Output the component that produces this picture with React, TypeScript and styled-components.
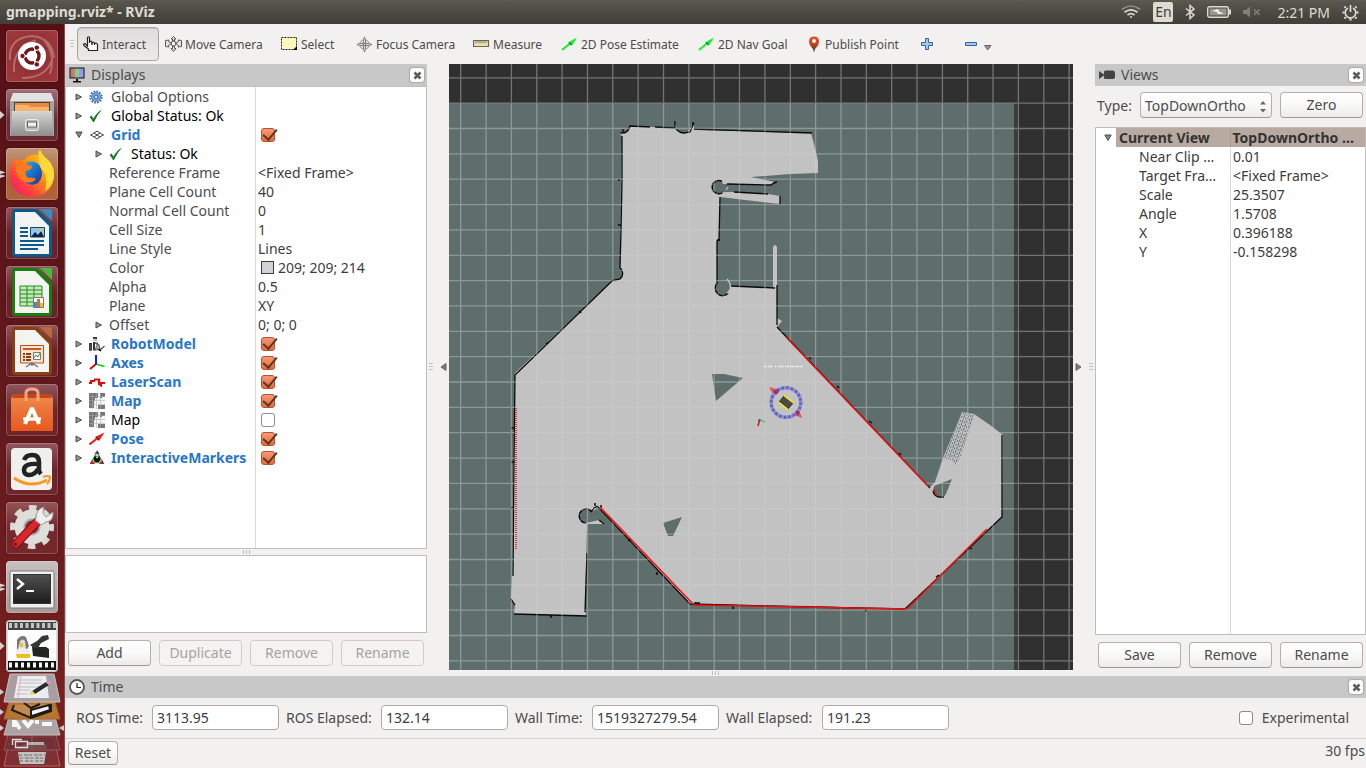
import React from "react";
import styled, { createGlobalStyle, css } from "styled-components";

const GlobalStyle = createGlobalStyle`
  * { box-sizing: border-box; }
  body { margin: 0; background: #f2f1ef; }
  body, button, input, select { font-family: "Noto Sans", "Open Sans", sans-serif; font-size: 14px; color: #4c4c4c; }
`;

/* ---------- frame ---------- */

const Desktop = styled.div`
  display: flex;
  flex-direction: column;
  height: 100vh;
  min-height: 640px;
  overflow: hidden;
`;

const MenuBar = styled.header`
  flex: none;
  display: flex;
  align-items: center;
  justify-content: space-between;
  height: 24px;
  padding: 0 7px 0 6px;
  background: linear-gradient(#5f5c4f, #57554b 10%, #3f3e39);
  color: #dfdbd2;
`;

const WindowTitle = styled.h1`
  margin: 0;
  font-size: 14px;
  line-height: 24px;
  font-weight: 700;
`;

const Indicators = styled.div`
  display: flex;
  align-items: center;
  gap: 12px;
  svg { display: block; }
`;

const LanguageBadge = styled.span`
  width: 20px;
  height: 20px;
  border-radius: 2px;
  background: #dfdbd2;
  color: #3f3e39;
  font-size: 14px;
  line-height: 20px;
  text-align: center;
`;

const Clock = styled.time`
  font-size: 14px;
  padding-left: 4px;
`;

const Body = styled.div`
  flex: 1;
  min-height: 0;
  display: flex;
`;

const Launcher = styled.nav`
  flex: none;
  display: flex;
  flex-direction: column;
  align-items: center;
  gap: 7px;
  width: 65px;
  padding: 6px 1px 0 0;
  overflow: hidden;
  background: linear-gradient(#561015, #641a1d 55%, #7c2121);
  border-right: 1px solid #8c4a47;
`;

const TileRow = styled.div`
  flex: none;
  display: flex;
  align-items: center;
  width: 64px;
  height: 52px;
`;

const Pips = styled.span`
  width: 6px;
  height: 12px;
  svg { display: block; }
`;

const Tile = styled.button<{ $bg: string }>`
  width: 52px;
  height: 52px;
  padding: 0;
  border: 0;
  border-radius: 4px;
  background: ${(p) => p.$bg};
  box-shadow: inset 0 0 0 1px rgba(255, 255, 255, 0.2), 0 0 2px rgba(0, 0, 0, 0.4);
  svg { display: block; }
`;

const FoldedStack = styled.svg`
  flex: none;
  display: block;
  margin-top: -6px;
`;

const Rviz = styled.main`
  flex: 1;
  min-width: 0;
  display: flex;
  flex-direction: column;
  background: #f2f1ef;
`;

/* ---------- toolbar ---------- */

const Toolbar = styled.div`
  flex: none;
  display: flex;
  align-items: center;
  height: 40px;
  padding-left: 5px;
`;

const Grip = styled.span`
  width: 7px;
  height: 8px;
  background: repeating-linear-gradient(#c9c7c4 0 1px, transparent 1px 3px);
  background-size: 4px 8px;
  background-repeat: no-repeat;
`;

const ToolButton = styled.button<{ $width: number; $active?: boolean }>`
  display: flex;
  align-items: center;
  gap: 3px;
  width: ${(p) => p.$width}px;
  height: 34px;
  padding: 0 0 0 5px;
  border: 1px solid transparent;
  border-radius: 4px;
  background: none;
  font-size: 12px;
  white-space: nowrap;
  svg { flex: none; display: block; }
  ${(p) =>
    p.$active &&
    css`
      border-color: #a9a5a0;
      background: linear-gradient(#dfdedc, #ebeae8);
      box-shadow: inset 0 1px 1px rgba(0, 0, 0, 0.12);
    `}
`;

/* ---------- docks ---------- */

const Workspace = styled.div`
  flex: 1;
  min-height: 0;
  display: flex;
`;

const Dock = styled.section<{ $width: number }>`
  flex: none;
  display: flex;
  flex-direction: column;
  width: ${(p) => p.$width}px;
`;

const DockTitle = styled.div`
  flex: none;
  display: flex;
  align-items: center;
  height: 22px;
  padding: 0 3px 0 4px;
  background: #c8c8c8;
  svg { display: block; }
`;

const DockName = styled.h2`
  flex: 1;
  margin: 0 0 0 6px;
  font-size: 14px;
  line-height: 22px;
  font-weight: 400;
`;

const CloseButton = styled.button`
  display: grid;
  place-items: center;
  width: 14px;
  height: 14px;
  padding: 0;
  border: 0;
  border-radius: 3px;
  background: #fdfdfd;
  box-shadow: 0 0 1px 1px rgba(120, 116, 110, 0.35);
`;

const TreeFrame = styled.div<{ $split: number }>`
  flex: 1;
  min-height: 0;
  overflow: hidden;
  border: 1px solid #c1beb9;
  background: linear-gradient(#dcdbda, #dcdbda) ${(p) => p.$split}px 0 / 1px 100% no-repeat #fff;
`;

const Tree = styled.table`
  width: 100%;
  border-collapse: collapse;
  table-layout: fixed;
  font-size: 14px;
  line-height: 19px;
`;

const NameCol = styled.col<{ $width: number }>`
  width: ${(p) => p.$width}px;
`;

const NameCell = styled.th<{ $indent: number; $tone?: string }>`
  height: 19px;
  padding: 0 0 0 ${(p) => p.$indent}px;
  text-align: left;
  font-weight: ${(p) => (p.$tone === "link" ? 700 : 400)};
  color: ${(p) => (p.$tone === "link" ? "#2a76c6" : p.$tone === "black" ? "#000" : "#4c4c4c")};
`;

const NameLine = styled.span`
  display: flex;
  align-items: center;
  height: 19px;
  white-space: nowrap;
`;

const Arrow = styled.span`
  flex: none;
  width: 14px;
  svg { display: block; }
`;

const RowIcon = styled.span`
  flex: none;
  width: 22px;
  svg { display: block; }
`;

const ValueCell = styled.td`
  height: 19px;
  padding: 0 0 0 3px;
  color: #3c3c3c;
  white-space: nowrap;
`;

const ValueLine = styled.span`
  display: flex;
  align-items: center;
  height: 19px;
  padding-left: 3px;
  gap: 4px;
`;

const Swatch = styled.span`
  width: 13px;
  height: 13px;
  border: 1px solid #3c3c3c;
  background: #d1d1d6;
`;

const CheckBox = styled.input`
  appearance: none;
  position: relative;
  width: 14px;
  height: 14px;
  margin: 0;
  border: 1px solid #8f8b86;
  border-radius: 3px;
  background: #fff;
  &:checked {
    border-color: #b4552f;
    background: linear-gradient(#f29a76, #e9693c);
  }
  &:checked::after {
    content: "";
    position: absolute;
    left: 4px;
    top: -3px;
    width: 6px;
    height: 12px;
    border: solid #5e3422;
    border-width: 0 2px 2px 0;
    transform: rotate(40deg);
  }
`;

const SelectedName = styled.th`
  height: 19px;
  padding: 0;
  text-align: left;
  color: #333;
  background: linear-gradient(#b8aaa1, #b8aaa1) 20px 0 no-repeat;
`;

const ToggleName = styled.span`
  display: grid;
  grid-template-columns: 15px 1fr;
  padding-left: 8px;
  align-items: center;
  white-space: nowrap;
`;

const SelectedValue = styled.td`
  height: 19px;
  padding: 0 0 0 2px;
  font-weight: 700;
  color: #333;
  background: #b8aaa1;
  border-left: 1px solid #a89b93;
  white-space: nowrap;
`;

const PropName = styled.th`
  height: 19px;
  padding: 0 0 0 43px;
  text-align: left;
  font-weight: 400;
  color: #3c3c3c;
  white-space: nowrap;
`;

const HHandle = styled.div`
  flex: none;
  display: flex;
  align-items: center;
  justify-content: center;
  height: 6px;
  &::after {
    content: "";
    width: 7px;
    height: 4px;
    background: repeating-linear-gradient(90deg, #c0bebb 0 1px, transparent 1px 3px);
  }
`;

const VHandle = styled.div`
  flex: none;
  display: flex;
  align-items: center;
  justify-content: center;
  gap: 7px;
  width: 22px;
  svg { display: block; }
`;

const HelpBox = styled.div`
  flex: none;
  height: 78px;
  border: 1px solid #c1beb9;
  background: #fff;
`;

const ButtonRow = styled.div<{ $below: number }>`
  flex: none;
  display: grid;
  grid-template-columns: repeat(auto-fit, 83px);
  gap: 8px;
  padding: 7px 0 ${(p) => p.$below}px 3px;
`;

const PushButton = styled.button`
  height: 26px;
  padding: 0 5px;
  border: 1px solid #b3afaa;
  border-bottom-color: #9c9893;
  border-radius: 4px;
  background: linear-gradient(#fff, #f9f9f8 50%, #ecebea);
  font-size: 14px;
  line-height: 22px;
  &:disabled {
    border-color: #cfccc8;
    background: #f4f3f2;
    color: #a5a3a1;
  }
`;

const TypeRow = styled.div`
  flex: none;
  display: grid;
  grid-template-columns: 35px 132px 83px;
  column-gap: 8px;
  align-items: center;
  padding: 6px 0 9px 2px;
  label { white-space: nowrap; }
`;

const SelectWrap = styled.div`
  position: relative;
  display: flex;
  svg { position: absolute; right: 5px; top: 8px; pointer-events: none; }
`;

const TypeSelect = styled.select`
  appearance: none;
  width: 100%;
  height: 26px;
  padding: 0 4px;
  border: 1px solid #b3afaa;
  border-bottom-color: #9c9893;
  border-radius: 4px;
  background: linear-gradient(#fff, #f9f9f8 50%, #ecebea);
`;

const Viewport = styled.svg`
  flex: 1;
  min-width: 0;
  min-height: 0;
  display: block;
  background: #303030;
`;

/* ---------- time panel ---------- */

const TimeRow = styled.div`
  flex: none;
  display: flex;
  align-items: center;
  height: 41px;
  padding: 0 17px 1px 11px;
  border-bottom: 1px solid #d6d4d1;
`;

const TimeField = styled.div<{ $label: number }>`
  display: grid;
  grid-template-columns: ${(p) => p.$label}px 127px;
  align-items: center;
  margin-right: 7px;
  white-space: nowrap;
`;

const TimeInput = styled.input`
  width: 100%;
  height: 25px;
  padding: 0 4px;
  border: 1px solid #aeaaa5;
  border-radius: 4px;
  background: #fff;
  color: #3c3c3c;
`;

const Experimental = styled.label`
  display: flex;
  align-items: center;
  gap: 9px;
  margin-left: auto;
`;

const StatusRow = styled.footer`
  flex: none;
  display: flex;
  align-items: flex-start;
  justify-content: space-between;
  height: 29px;
  padding: 2px 1px 0 3px;
`;

const ResetButton = styled(PushButton)`
  width: 50px;
  height: 24px;
  padding: 0;
  line-height: 20px;
`;

/* ---------- small icons ---------- */

const RightArrow = () => (
  <svg width="8" height="8" viewBox="0 0 8 8"><path d="M1 1L6.500 4L1 7Z" fill="#999" stroke="#4c4c4c" strokeWidth="1" /></svg>
);
const DownArrow = () => (
  <svg width="8" height="8" viewBox="0 0 8 8"><path d="M.8 1H7.200L4 6.500Z" fill="#888" stroke="#4c4c4c" strokeWidth="1" /></svg>
);
const CheckMark = () => (
  <svg width="14" height="14" viewBox="0 0 14 14"><path d="M.5 8L2.500 6.500L4.500 9.500Q8 3 13 .5Q8 6 5 13H4Q2.500 10 .5 8Z" fill="#1c7a22" /></svg>
);
const Gear = () => (
  <svg width="14" height="14" viewBox="0 0 14 14">
    <circle cx="7" cy="7" r="5.600" fill="none" stroke="#3f6fb5" strokeWidth="2" strokeDasharray="1.800 1.100" />
    <circle cx="7" cy="7" r="4.300" fill="#8fb0de" stroke="#4a78ba" />
    <circle cx="7" cy="7" r="2.200" fill="#6f97d2" stroke="#3f6fb5" />
    <circle cx="7" cy="7" r=".9" fill="#fff" />
  </svg>
);
const GridIcon = () => (
  <svg width="16" height="12" viewBox="0 0 16 12" fill="none" stroke="#444" strokeWidth="1">
    <path d="M2 6L8 2L14 6L8 10ZM5 4L11 8M11 4L5 8" />
    <path d="M8 2V3M2 6H1M14 6H15" />
  </svg>
);
const RobotIcon = () => (
  <svg width="16" height="16" viewBox="0 0 16 16">
    <path d="M4 1H8V3H4Z" fill="#33415e" /><path d="M4.500 3.500H8V5H4.500Z" fill="#aaa" />
    <path d="M0 7H3V14.500H2V11L1 14.500H0ZM4 6H6V10L7 14.500H4Z" fill="#333" />
    <path d="M1.500 8V15M6 7L9 7.500M8 7V14.500M9.500 8L11 14L15.500 10" stroke="#555" strokeWidth="1.300" fill="none" />
    <path d="M9 13L12 15" stroke="#000" strokeWidth="1.500" />
  </svg>
);
const AxesIcon = () => (
  <svg width="16" height="16" viewBox="0 0 16 16" fill="none" strokeWidth="1.800">
    <path d="M7 9L1 14" stroke="#e00000" /><path d="M7 9L15.500 11.500" stroke="#00d820" /><path d="M7 9.500V0" stroke="#0000e8" />
  </svg>
);
const LaserIcon = () => (
  <svg width="16" height="10" viewBox="0 0 16 10" fill="none" stroke="#f00000" strokeWidth="2">
    <path d="M0 6H2V4H5L6 2.500H10V7L12 8.500V6H16" />
  </svg>
);
const MapIcon = () => (
  <svg width="16" height="16" viewBox="0 0 16 16">
    <path d="M0 0H16V16H0Z" fill="#f4f4f4" />
    <path d="M0 0H9V5H6V8H5V15H0ZM11 0H16V4H13V5H11ZM9 12H16V16H9Z" fill="#777" />
    <path d="M0 3.500H16M0 7.500H16M0 11.500H16M3.500 0V16M7.500 0V16M11.500 0V16" stroke="#aaa" strokeWidth=".5" />
  </svg>
);
const PoseIcon = () => (
  <svg width="16" height="14" viewBox="0 0 16 14">
    <path d="M.5 12.500L8 6.500" stroke="#f02010" strokeWidth="2" /><path d="M6 5L15.500 .5L10 9Z" fill="#f02010" /><path d="M7 5L10 8" stroke="#8a1a10" strokeWidth="1.200" />
  </svg>
);
const MarkersIcon = () => (
  <svg width="16" height="16" viewBox="0 0 16 16">
    <path d="M8 2L2.500 12.500H13.500Z" fill="none" stroke="#30c040" strokeWidth="1.500" />
    <path d="M8 .5L10.500 4H5.500ZM1 14L3 9.500L6 14ZM15 14L13 9.500L10 14Z" fill="#e02020" />
    <path d="M8 .5L10.500 4H8ZM12.500 14H15L13.500 11ZM1 14H3L2 12Z" fill="#2030e0" />
    <circle cx="8" cy="9" r="3.300" fill="#111" /><path d="M6.500 6.500H10L8 8.500Z" fill="#fff" />
  </svg>
);
const Cross = () => (
  <svg width="9" height="9" viewBox="0 0 9 9"><path d="M1.500 1.500L7.500 7.500M7.500 1.500L1.500 7.500" stroke="#5c5c5c" strokeWidth="2.600" /></svg>
);

/* ---------- toolbar icons ---------- */

const HandIcon = () => (
  <svg width="16" height="16" viewBox="0 0 16 16">
    <path d="M4.500 10V1.500Q5.500 0 6.500 1.500V7V5.500Q8 4.500 9 6V7Q10.500 5.500 11.500 7V7.500Q13.500 6.500 14.500 8.500V14.500H5.500V13L1 9.500Q0 7.500 2 7.500Z" fill="#fff" stroke="#222" strokeWidth="1.200" />
    <path d="M9 6.500V9M11.500 7.500V9M5.500 14.500H15" stroke="#222" strokeWidth="1.200" />
  </svg>
);
const MoveIcon = () => (
  <svg width="17" height="16" viewBox="0 0 17 16" fill="#e4e4e4" stroke="#555" strokeWidth="1">
    <path d="M8.500 .5L11 3H9.500V5H7.500V3H6ZM8.500 15.500L11 12.500H9.500V10.500H7.500V12.500H6ZM.5 4.500L4 4L3.500 5.500L6.500 7.500L3.500 9.500L4 11L.5 10.500ZM16.500 4.500L13 4L13.500 5.500L10.500 7.500L13.500 9.500L13 11L16.500 10.500Z" />
    <circle cx="8.500" cy="7.500" r="2.500" fill="none" />
  </svg>
);
const SelectIcon = () => (
  <svg width="17" height="14" viewBox="0 0 17 14">
    <path d="M.5 .5H15.500V12.500H.5Z" fill="#fbf7bd" stroke="#222" strokeDasharray="2 1" /><path d="M16 9V13H12Z" fill="#000" />
  </svg>
);
const FocusIcon = () => (
  <svg width="17" height="17" viewBox="0 0 18 18" fill="#e4e4e4" stroke="#777" strokeWidth="1">
    <circle cx="9" cy="9" r="5" fill="none" /><circle cx="9" cy="9" r="2.500" fill="none" />
    <path d="M9 1L10 4V8H8V4ZM9 17L10 14V10H8V14ZM1 9L4 8H8V10H4ZM17 9L14 8H10V10H14Z" />
  </svg>
);
const RulerIcon = () => (
  <svg width="17" height="8" viewBox="0 0 17 8">
    <path d="M.5 .5H15.500V6.500H.5Z" fill="#eee2a4" stroke="#666" strokeWidth="1.200" /><path d="M3 1V3.500M5 1V3M7 1V3.500M9 1V3M11 1V3.500M13 1V3" stroke="#666" strokeWidth=".8" />
  </svg>
);
const GreenArrow = () => (
  <svg width="17" height="14" viewBox="0 0 17 14">
    <path d="M1 13L9 6.500" stroke="#0df02c" strokeWidth="1.800" /><path d="M7 5.500L16 .5L11 8.500Z" fill="#0df02c" /><path d="M8 5.500L10.500 8" stroke="#14801e" strokeWidth="1.200" />
  </svg>
);
const PinIcon = () => (
  <svg width="15" height="17" viewBox="0 0 15 17">
    <defs><linearGradient id="pin" x2="0" y2="1"><stop stopColor="#ec5130" /><stop offset=".5" stopColor="#c04428" /><stop offset="1" stopColor="#3a2a10" /></linearGradient></defs>
    <path d="M7 .5Q12 .5 12 5.500Q12 9 8 13L7 16.500L6 13Q2 9 2 5.500Q2 .5 7 .5Z" fill="url(#pin)" /><circle cx="7" cy="5" r="1.900" fill="#fff" />
  </svg>
);
const PlusIcon = () => (
  <svg width="12" height="12" viewBox="0 0 12 12"><path d="M4.500 .5H7.500V4.500H11.500V7.500H7.500V11.500H4.500V7.500H.5V4.500H4.500Z" fill="#a9c4ea" stroke="#3465a4" /></svg>
);
const MinusIcon = () => (
  <svg width="27" height="14" viewBox="0 0 27 14"><path d="M.5 5.500H11.500V8.500H.5Z" fill="#a9c4ea" stroke="#3465a4" /><path d="M19.500 8.500H26L22.700 13Z" fill="#999" stroke="#666" /></svg>
);

/* ---------- launcher drawings ---------- */

const UbuntuLogo = () => (
  <svg width="52" height="52" viewBox="0 0 52 52">
    <g fill="none" stroke="#fff" strokeOpacity=".28" strokeWidth="2">
      <path d="M4 30Q2 8 26 6Q46 8 48 28M8 42Q6 18 30 10M44 44Q50 24 38 10M16 48Q40 48 46 30" />
    </g>
    <circle cx="26" cy="26" r="14" fill="#fff" />
    <circle cx="26" cy="26" r="7" fill="none" stroke="#73171c" strokeWidth="3.400" />
    <path d="M26 26L13 26M26 26L33 14M26 26L33 38" stroke="#fff" strokeWidth="2" />
    <circle cx="26" cy="26" r="5" fill="#fff" />
    <g fill="#73171c" stroke="#fff" strokeWidth="1"><circle cx="16.500" cy="26" r="2.700" /><circle cx="30.800" cy="17.600" r="2.700" /><circle cx="30.800" cy="34.400" r="2.700" /></g>
  </svg>
);
const FilesIcon = () => (
  <svg width="52" height="52" viewBox="0 0 52 52">
    <defs><linearGradient id="cab" x2="0" y2="1"><stop stopColor="#d6d6d4" /><stop offset="1" stopColor="#8d8d8b" /></linearGradient></defs>
    <path d="M7 4H45L48 12V47H4V12Z" fill="#e2e2e0" /><path d="M4 12H48V47H4Z" fill="#a4a4a2" />
    <path d="M8 13H44V22H8Z" fill="#4b413b" /><path d="M9 14H43V22H9Z" fill="#e88a3d" /><path d="M9 16H22L24 18H43V22H9Z" fill="#f6b36e" />
    <path d="M6 22H46L47 47H5Z" fill="url(#cab)" /><rect x="19.500" y="30.500" width="13" height="11" rx="2" fill="#bbb" stroke="#ececec" /><rect x="21.500" y="33" width="9" height="5" fill="#eee" stroke="#666" />
  </svg>
);
const FirefoxIcon = () => (
  <svg width="52" height="52" viewBox="0 0 52 52">
    <defs>
      <linearGradient id="ff" x1="1" x2="0" y2="1"><stop stopColor="#ffe226" /><stop offset=".4" stopColor="#ff980e" /><stop offset=".75" stopColor="#ff3647" /><stop offset="1" stopColor="#e3157a" /></linearGradient>
      <linearGradient id="fx" x2="1" y2="1"><stop stopColor="#1db4f4" /><stop offset="1" stopColor="#1b2f9c" /></linearGradient>
    </defs>
    <path d="M4 22Q5 14 10 10L11 14Q14 11 18 12Q24 5 32 7Q31 4 34 2Q36 7 42 12Q49 19 48 29Q46 47 26 49Q5 47 4 28Z" fill="url(#ff)" />
    <path d="M20 15Q28 11 34 18Q39 28 32 35Q25 39 19 34L16 25Q20 23 21 21Z" fill="url(#fx)" />
    <path d="M10 12Q13 12 16 15Q21 15 22 17L26 18Q26 22 20 23Q18 28 23 30Q27 29 30 31Q25 37 17 33Q8 28 10 12Z" fill="#ff7a1a" />
    <path d="M34 2Q36 7 42 12Q49 19 48 29Q46 39 39 43Q42 32 38 24Q30 16 34 2Z" fill="#ffd83a" />
  </svg>
);

const DocPage = ({ edge, fold, children }: { edge: string; fold: string; children: React.ReactNode }) => (
  <svg width="52" height="52" viewBox="0 0 52 52">
    <path d="M6 5Q6 2 9 2H31L46 17V47Q46 50 43 50H9Q6 50 6 47Z" fill={edge} />
    <path d="M9 5H29L43 19V47H9Z" fill="#f3f3f2" /><path d="M34 2H46V14Z" fill={fold} />
    {children}
  </svg>
);
const WriterIcon = () => (
  <DocPage edge="#0c5a8c" fold="#3a8cc0">
    <path d="M14 21H22M14 25H22M14 29H22M14 34H38M14 38H38M14 42H32" stroke="#0c5a8c" strokeWidth="2" />
    <path d="M24.500 20.500H38.500V30H24.500Z" fill="#8fc6ea" stroke="#0c4a74" /><path d="M25 30L29 25L32 28L35 24L38 30Z" fill="#124" /><circle cx="35" cy="23" r="1.500" fill="#ffc020" />
  </DocPage>
);
const CalcIcon = () => (
  <DocPage edge="#187c10" fold="#4cb840">
    <path d="M14 20H36V40H14Z" fill="#c4eab8" stroke="#2a8a20" /><path d="M14 24H36M14 28H36M14 32H36M14 36H36M21 20V40M28 20V40" stroke="#2a8a20" />
    <path d="M27.500 31.500H37.500V41.500H27.500Z" fill="#fff" stroke="#777" /><path d="M28 36H31V41H28Z" fill="#2a9ad8" /><path d="M31 33H34V41H31Z" fill="#e06a28" /><path d="M34 37H37V41H34Z" fill="#f0c020" />
  </DocPage>
);
const ImpressIcon = () => (
  <DocPage edge="#8a3f10" fold="#b86a3c">
    <path d="M14.500 20.500H37.500V38H14.500Z" fill="#f6e0d0" stroke="#b8501c" /><path d="M17 24H35" stroke="#c85a20" strokeWidth="2" />
    <path d="M17 29H25M17 32H25M17 35H25" stroke="#8a3f10" strokeWidth="2" strokeDasharray="2 1 5" /><path d="M27.500 27.500H34.500V34.500H27.500Z" fill="#fff" stroke="#777" /><path d="M28 33L30 30L32 32L34 28" stroke="#28a028" fill="none" />
    <path d="M26 38V41M20 42L26 38L32 42" stroke="#777" strokeWidth="1.500" fill="none" />
  </DocPage>
);
const SoftwareIcon = () => (
  <svg width="52" height="52" viewBox="0 0 52 52">
    <defs><linearGradient id="bag" x2="0" y2="1"><stop stopColor="#f08a4e" /><stop offset="1" stopColor="#e8581c" /></linearGradient></defs>
    <path d="M8 10H44L47 14V47H5V14Z" fill="url(#bag)" /><path d="M8 10H44L46 14H6Z" fill="#c2481a" />
    <path d="M20 17V9Q20 5 26 5Q32 5 32 9V17" fill="none" stroke="#f6a67c" strokeWidth="3" />
    <path d="M19 40L26 24L33 40" fill="none" stroke="#fff" strokeWidth="4" strokeLinejoin="bevel" /><path d="M17 35H35" stroke="#fff" strokeWidth="3.500" />
  </svg>
);
const AmazonIcon = () => (
  <svg width="52" height="52" viewBox="0 0 52 52">
    <rect x="5" y="5" width="41" height="42" rx="4" fill="#f0f0ef" />
    <path d="M18 17Q20 12 26 12Q33 12 33 19V27Q33 29 35 31M32 21Q18 20 18 27Q18 32 23 32Q29 32 32 26" fill="none" stroke="#222" strokeWidth="4.500" />
    <path d="M8 35Q24 46 41 37" stroke="#f79a1c" strokeWidth="3" fill="none" /><path d="M37 34Q42 32 44 34Q44 38 41 41" stroke="#f79a1c" strokeWidth="2" fill="none" />
  </svg>
);
const SettingsIcon = () => (
  <svg width="52" height="52" viewBox="0 0 52 52">
    <circle cx="26" cy="25" r="18.500" fill="none" stroke="#d8d8d6" strokeWidth="7" strokeDasharray="7.300 7.230" strokeDashoffset="3.500" />
    <circle cx="26" cy="25" r="12.500" fill="none" stroke="#dededc" strokeWidth="10" /><circle cx="26" cy="25" r="7.500" fill="none" stroke="#a8a8a6" strokeWidth="2" />
    <path d="M10 42L31 20" stroke="#8c1014" strokeWidth="9" strokeLinecap="round" /><path d="M10 42L31 20" stroke="#d6282c" strokeWidth="6.500" strokeLinecap="round" />
    <path d="M30 16Q30 7 38 5L37 11L40 15L47 10Q48 19 40 20L35 23L29 18Z" fill="#eee" stroke="#999" /><circle cx="9.500" cy="42" r="1.500" fill="#5a1014" />
  </svg>
);
const TerminalIcon = () => (
  <svg width="52" height="52" viewBox="0 0 52 52">
    <defs><linearGradient id="term" x2="0" y2="1"><stop stopColor="#505050" /><stop offset="1" stopColor="#1c1c1c" /></linearGradient></defs>
    <rect x="4" y="10" width="44" height="37" rx="1" fill="#f0f0ee" stroke="#777" /><rect x="7.500" y="13.500" width="37" height="29" fill="url(#term)" stroke="#333" />
    <path d="M11 18L17 23L11 28" fill="none" stroke="#fff" strokeWidth="2.400" /><path d="M20 30H28" stroke="#fff" strokeWidth="2" />
  </svg>
);
const RecorderIcon = () => (
  <svg width="52" height="52" viewBox="0 0 52 52">
    <rect x="1" y="1" width="50" height="50" rx="3" fill="#fff" stroke="#bbb" />
    <path d="M2 2H50V10H2Z" fill="#444" /><path d="M2 41H50V50H2Z" fill="#111" />
    <path d="M3 5.500H50" stroke="#c4c4c4" strokeWidth="5" strokeDasharray="3 2.500" /><path d="M3 45H50" stroke="#f4f4f4" strokeWidth="5" strokeDasharray="3 3" />
    <path d="M11 20Q15 14 20 17L23 26L20 31H11Z" fill="#777" /><path d="M14 21Q17 18 19 21L20 29H12Z" fill="#ddd" /><path d="M9 31Q16 24 24 31V37H11Z" fill="#eee" /><path d="M10 34H24V38H11Z" fill="#e8c020" /><path d="M14 23H17V27H14Z" fill="#f0c020" />
    <path d="M26 27L40 27L43 29V38L27 36Z" fill="#222522" /><path d="M24 25L31 21L36 16L42 15L43 19L35 23L32 28L28 28Z" fill="#343834" />
  </svg>
);

const launcherItems: { name: string; bg: string; icon: React.ReactNode; pips?: number }[] = [
  { name: "Search your computer", bg: "radial-gradient(#8a2c30, #a03a3c)", icon: <UbuntuLogo /> },
  { name: "Files", bg: "linear-gradient(#a0707a, #6c2a36 60%)", icon: <FilesIcon />, pips: 1 },
  { name: "Firefox", bg: "linear-gradient(#c09878, #b0623a 60%)", icon: <FirefoxIcon />, pips: 2 },
  { name: "LibreOffice Writer", bg: "linear-gradient(#90565c, #6a2228 50%)", icon: <WriterIcon /> },
  { name: "LibreOffice Calc", bg: "linear-gradient(#90565c, #6a2228 50%)", icon: <CalcIcon /> },
  { name: "LibreOffice Impress", bg: "linear-gradient(#90565c, #6a2228 50%)", icon: <ImpressIcon /> },
  { name: "Ubuntu Software", bg: "linear-gradient(#90565c, #6e262a 50%)", icon: <SoftwareIcon /> },
  { name: "Amazon", bg: "linear-gradient(#90565c, #6e262a 50%)", icon: <AmazonIcon /> },
  { name: "System Settings", bg: "linear-gradient(#945558, #74282c 50%)", icon: <SettingsIcon /> },
  { name: "Terminal", bg: "linear-gradient(#c8c0be, #a49a98)", icon: <TerminalIcon />, pips: 2 },
  { name: "Screen recorder", bg: "#ccc", icon: <RecorderIcon />, pips: 1 },
];

const FoldedTiles = () => (
  <FoldedStack width="64" height="95" viewBox="0 0 64 95" role="img" aria-label="Folded launcher items">
    <path d="M10 64H54L60 93H4Z" fill="#7e3034" stroke="#a8686a" />
    <path d="M18 79H46L44 91H20Z" fill="#c4c2be" /><path d="M19 82H45M20 85H44M20 88H44" stroke="#8a8884" strokeWidth="1.500" strokeDasharray="3 2 4 1" /><path d="M18 73Q32 68 46 71L47 76H18Z" fill="#9c9894" />
    <path d="M8 62H56L60 77H4Z" fill="#6d3038" fillOpacity=".75" stroke="#8f5a5e" /><path d="M32 62V77" stroke="#8f5a5e" /><path d="M12.500 72V66.500H22M15.500 68.500H27.500V74.500H15.500Z" fill="none" stroke="#ddd" strokeWidth="1.400" /><path d="M28 69H44V72H28Z" fill="#b4b0ac" />
    <path d="M10 40H54L60 62H4Z" fill="#aca4a4" stroke="#c0baba" />
    <path d="M14 47V54M15 48L20 56M23 47L28 53L33 47M37 47V51M42 51H52" stroke="#f6f6f6" strokeWidth="4" fill="none" />
    <path d="M10 26H54L60 46H4Z" fill="#b8752f" stroke="#a06830" /><path d="M14 32L12 37L31 45L51 38V31" fill="#c4884c" stroke="#1c1c1c" strokeWidth="2" /><path d="M24 30L31 35L40 31" fill="none" stroke="#1c1c1c" strokeWidth="2" /><path d="M31 36V44M31 37L49 32L50 37L32 43" fill="#f4f4f4" stroke="#1c1c1c" strokeWidth="2" />
    <path d="M10 1H54L60 29H4Z" fill="#a99fa2" stroke="#c8c2c2" /><path d="M18 3H46L49 25H14Z" fill="#ecedf0" /><path d="M19 7H42M18 10H42M18 14H40M17 17H30M16 21H28" stroke="#bcbcc4" /><path d="M21 3L18 25" stroke="#e8b0b8" />
    <path d="M32 18L46 9L49 12L35 21Z" fill="#2a2a2a" /><path d="M45 9L49 7L52 9L49 12Z" fill="#d890c8" /><path d="M29 22L32 17L35 21Z" fill="#e8d060" />
    <path d="M0 16L4 19L0 22ZM0 36L4 39L0 42ZM0 52L4 55L0 58ZM64 52L59 55L64 58Z" fill="#ccc" />
  </FoldedStack>
);

/* ---------- map view ---------- */

const STEP = 25.35;
const gridPath =
  Array.from({ length: 25 }, (_, i) => `M${(460.7 + i * STEP).toFixed(1)} 64V670`).join("") +
  Array.from({ length: 24 }, (_, i) => `M449 ${(77.8 + i * STEP).toFixed(1)}H1073`).join("");

const freeSpace =
  "M630 126L675 128V122L677 130Q680 133 684 133Q689 132 691 127L694 122V130L811 133L815 148L818 161V173L790 174L751 177L775 182L771 185L727 184H718V192H734L768 194L780 196V204L720 197L719 240L717 241V288H723L731 286L773 288V247Q775 243 777 247V318L782 321L777 327L930 487L935 482L943 458L962 412L974 414L990 425L1003 435L1002 516L906 609L810 606L690 604L598 507L592 512L586 516V523L599 520L604 524H587L585 612L587 616L514 614L515 605L511 598L512 577L513 480L515 373L612 281Q622 281 623 273L620 268L621 180L622 136L619 133Q628 134 630 126Z";

const walls =
  "M620 133Q628 134 630 126L650 127M655 127L675 128V121M676 129Q680 133 684 133M684 133L690 132L694 123M694 129L812 133M622 136V180L621 230L620 268L622 270M611 281L620 279Q624 275 622 271M612 281L515 375L514 460L513 576M511 599L515 605M514 614L587 616M585 612L587 553M604 524L599 520M598 507L690 604L810 607L906 609M905 609L1002 517V435M777 327L930 488M777 325V285M731 286L775 288M717 284V241L719 240L720 197M734 192L768 194M727 184L771 185L775 182M591 512L594 508L598 506M933 491Q934 498 944 497M780 196V204";

const wallNoise =
  "M618 225H621M618 180H620M623 132V129M693 122V125M717 240H720M579 311L581 313M546 344L549 342M511 428H514M511 462H514M511 508H514M628 540H631M657 572V575M733 606V609M551 615V618M866 609V612M809 357L811 359M837 386L839 388M869 421L872 423M899 453L901 455M969 547L972 549M936 577L939 575M774 183L777 182M595 503V506M601 505V508M694 603H700";

const MapView = () => (
  <Viewport viewBox="449 64 624 606" preserveAspectRatio="xMidYMid slice" role="img" aria-label="Top-down view of the map">
    <defs>
      <pattern id="speckle" width="4" height="4" patternUnits="userSpaceOnUse" patternTransform="rotate(20)">
        <path d="M0 0H1V3H0ZM2 2H3V4H2Z" fill="#5e6e6c" />
      </pattern>
    </defs>
    <path d="M449 103.500H1014V670H449Z" fill="#5e6e6c" />
    <path d="M1014 103.500H1017V670H1014Z" fill="#3a3c3c" />
    <path d={freeSpace} fill="#c2c2c2" />
    <path d="M962 412L974 415L969 432L960 458L955 465L952 460L943 459Z" fill="url(#speckle)" />
    <path d="M712 374H724L743 378L730 389L716 401ZM663 523L682 517L673 536H668ZM934 486L952 479L946 494Q944 498 939 498Q934 497 933 491Z" fill="#5e6e6c" />
    <g fill="#5e6e6c"><circle cx="718" cy="187" r="6" /><circle cx="723" cy="288" r="7" /><circle cx="586" cy="516" r="6.500" /></g>
    <path d={walls} fill="none" stroke="#0a0a0a" strokeWidth="1.300" />
    <path d="M722 181.500A6.500 6.500 0 1 0 723 192M716.500 284A7.500 7.500 0 0 0 728 293.500M592 512A7 7 0 1 0 586 523" fill="none" stroke="#0a0a0a" strokeWidth="1.500" strokeDasharray="5 .5" />
    <path d={wallNoise} fill="none" stroke="#0a0a0a" strokeWidth="1.500" />
    <path d="M727 279Q732 284 730 290L727 293M726 190L728 187" fill="none" stroke="#c2c2c2" strokeWidth="1.300" />
    <path d={gridPath} fill="none" stroke="#d1d1d6" strokeOpacity=".42" strokeWidth="1.300" />
    <g fill="none" stroke="#f01010" strokeWidth="1.500">
      <path d="M786 337L928 486M600 507L693 604M693 605L906 609M907 609L987 529M934 489L936 495" />
      <path d="M516 408V550" strokeDasharray="1 1" />
    </g>
    <path d="M764 366.500H767M768 366.500H773M775 366.500H776M778 366.500H784M785 366.500H789M790 366.500H794M795 366.500H803" stroke="#f4f4f4" strokeWidth="1.500" strokeDasharray="1.500 .7 2 1" />
    <path d="M769 387L777 389L773 394ZM802 418L794 415L799 410Z" fill="#e05858" />
    <circle cx="786" cy="402.500" r="14.800" fill="none" stroke="#8c8cd6" strokeWidth="3.400" />
    <circle cx="786" cy="402.500" r="14.800" fill="none" stroke="#6060b4" strokeWidth="3" strokeDasharray="2 2.650" />
    <path d="M773 391L777 389L779 392L776 395ZM795 412L798 410L800 413L797 416Z" fill="#a03070" />
    <path d="M784 396L793 403L788 409L779 402Z" fill="#4a4a46" /><path d="M779 402L784 396M788 409L793 403" stroke="#2e2e2c" /><path d="M784 395.500L793.500 403M778.500 402L788 409.500" stroke="#f4f000" strokeWidth="1.400" />
    <path d="M759.500 420L758 426" stroke="#e01010" strokeWidth="1.600" /><path d="M759 420L765 422" stroke="#10e020" strokeWidth="1.300" /><path d="M758.500 419H760.500V421H758.500Z" fill="#4848b0" />
  </Viewport>
);

/* ---------- data ---------- */

type Row = { name: string; arrow?: "right" | "down"; icon?: React.ReactNode; child?: boolean; tone?: string; value?: string; checked?: boolean; swatch?: boolean };

const displayRows: Row[] = [
  { name: "Global Options", arrow: "right", icon: <Gear /> },
  { name: "Global Status: Ok", arrow: "right", icon: <CheckMark />, tone: "black" },
  { name: "Grid", arrow: "down", icon: <GridIcon />, tone: "link", checked: true },
  { name: "Status: Ok", arrow: "right", icon: <CheckMark />, child: true, tone: "black" },
  { name: "Reference Frame", child: true, value: "<Fixed Frame>" },
  { name: "Plane Cell Count", child: true, value: "40" },
  { name: "Normal Cell Count", child: true, value: "0" },
  { name: "Cell Size", child: true, value: "1" },
  { name: "Line Style", child: true, value: "Lines" },
  { name: "Color", child: true, value: "209; 209; 214", swatch: true },
  { name: "Alpha", child: true, value: "0.5" },
  { name: "Plane", child: true, value: "XY" },
  { name: "Offset", arrow: "right", child: true, value: "0; 0; 0" },
  { name: "RobotModel", arrow: "right", icon: <RobotIcon />, tone: "link", checked: true },
  { name: "Axes", arrow: "right", icon: <AxesIcon />, tone: "link", checked: true },
  { name: "LaserScan", arrow: "right", icon: <LaserIcon />, tone: "link", checked: true },
  { name: "Map", arrow: "right", icon: <MapIcon />, tone: "link", checked: true },
  { name: "Map", arrow: "right", icon: <MapIcon />, tone: "black", checked: false },
  { name: "Pose", arrow: "right", icon: <PoseIcon />, tone: "link", checked: true },
  { name: "InteractiveMarkers", arrow: "right", icon: <MarkersIcon />, tone: "link", checked: true },
];

const viewRows = [
  ["Near Clip …", "0.01"],
  ["Target Fra…", "<Fixed Frame>"],
  ["Scale", "25.3507"],
  ["Angle", "1.5708"],
  ["X", "0.396188"],
  ["Y", "-0.158298"],
];

const tools = [
  { name: "Interact", icon: <HandIcon />, width: 82, active: true },
  { name: "Move Camera", icon: <MoveIcon />, width: 116 },
  { name: "Select", icon: <SelectIcon />, width: 75 },
  { name: "Focus Camera", icon: <FocusIcon />, width: 117 },
  { name: "Measure", icon: <RulerIcon />, width: 88 },
  { name: "2D Pose Estimate", icon: <GreenArrow />, width: 137 },
  { name: "2D Nav Goal", icon: <GreenArrow />, width: 109 },
  { name: "Publish Point", icon: <PinIcon />, width: 114 },
];

const times = [
  { id: "ros-time", label: "ROS Time:", value: "3113.95", width: 76 },
  { id: "ros-elapsed", label: "ROS Elapsed:", value: "132.14", width: 95 },
  { id: "wall-time", label: "Wall Time:", value: "1519327279.54", width: 77 },
  { id: "wall-elapsed", label: "Wall Elapsed:", value: "191.23", width: 96 },
];

const DisplaysDock = () => (
  <Dock $width={362}>
    <DockTitle>
      <svg width="16" height="16" viewBox="0 0 16 16">
        <path d="M.5 .5H15.500V11.500H.5Z" fill="#111" /><path d="M1.500 1.500H6V10.500H1.500Z" fill="#c87878" /><path d="M6 1.500H10V10.500H6Z" fill="#80d080" /><path d="M10 1.500H14.500V10.500H10Z" fill="#9898e8" /><path d="M7 12H9V14H12V15.500H4V14H7Z" fill="#111" />
      </svg>
      <DockName>Displays</DockName>
      <CloseButton aria-label="Close Displays"><Cross /></CloseButton>
    </DockTitle>
    <TreeFrame $split={189}>
      <Tree>
        <colgroup><NameCol $width={189} /><col /></colgroup>
        <tbody>
          {displayRows.map((r, i) => (
            <tr key={i}>
              <NameCell scope="row" $indent={r.child ? (r.arrow ? 29 : 43) : 9} $tone={r.tone}>
                <NameLine>
                  {r.arrow && <Arrow>{r.arrow === "right" ? <RightArrow /> : <DownArrow />}</Arrow>}
                  {r.icon && <RowIcon>{r.icon}</RowIcon>}
                  {r.name}
                </NameLine>
              </NameCell>
              <ValueCell>
                {r.checked !== undefined ? (
                  <ValueLine><CheckBox type="checkbox" defaultChecked={r.checked} aria-label={`Show ${r.name}`} /></ValueLine>
                ) : r.swatch ? (
                  <ValueLine><Swatch />{r.value}</ValueLine>
                ) : (
                  r.value
                )}
              </ValueCell>
            </tr>
          ))}
        </tbody>
      </Tree>
    </TreeFrame>
    <HHandle />
    <HelpBox />
    <ButtonRow $below={4}>
      <PushButton>Add</PushButton>
      <PushButton disabled>Duplicate</PushButton>
      <PushButton disabled>Remove</PushButton>
      <PushButton disabled>Rename</PushButton>
    </ButtonRow>
  </Dock>
);

const ViewsDock = () => (
  <Dock $width={271}>
    <DockTitle>
      <svg width="16" height="10" viewBox="0 0 16 10"><path d="M0 1L5 4.500V1.500Q6 .5 7 .5H14Q16 .5 16 3V7Q16 9 14 9H7Q5 9 5 8V5.500L0 9Z" fill="#444" /></svg>
      <DockName>Views</DockName>
      <CloseButton aria-label="Close Views"><Cross /></CloseButton>
    </DockTitle>
    <TypeRow>
      <label htmlFor="view-type">Type:</label>
      <SelectWrap>
        <TypeSelect id="view-type"><option>TopDownOrtho</option></TypeSelect>
        <svg width="8" height="13" viewBox="0 0 8 13"><path d="M1 4.500L4 1L7 4.500ZM1 9L4 12.500L7 9Z" fill="#666" /></svg>
      </SelectWrap>
      <PushButton>Zero</PushButton>
    </TypeRow>
    <TreeFrame $split={134}>
      <Tree>
        <colgroup><NameCol $width={134} /><col /></colgroup>
        <thead>
          <tr>
            <SelectedName scope="col"><ToggleName><DownArrow />Current View</ToggleName></SelectedName>
            <SelectedValue>TopDownOrtho …</SelectedValue>
          </tr>
        </thead>
        <tbody>
          {viewRows.map(([name, value]) => (
            <tr key={name}>
              <PropName scope="row">{name}</PropName>
              <ValueCell>{value}</ValueCell>
            </tr>
          ))}
        </tbody>
      </Tree>
    </TreeFrame>
    <ButtonRow $below={2}>
      <PushButton>Save</PushButton>
      <PushButton>Remove</PushButton>
      <PushButton>Rename</PushButton>
    </ButtonRow>
  </Dock>
);

const Dots = () => <svg width="4" height="8" viewBox="0 0 4 8"><path d="M0 .5H4M0 3.500H4M0 6.500H4" stroke="#c4c2bf" /></svg>;

export default function App() {
  return (
    <Desktop>
      <GlobalStyle />
      <MenuBar>
        <WindowTitle>gmapping.rviz* - RViz</WindowTitle>
        <Indicators>
          <svg width="20" height="14" viewBox="0 0 20 14" fill="none" stroke="#dfdbd2" strokeWidth="1.700">
            <path d="M.8 4.500Q10-2.500 19.200 4.500" strokeOpacity=".45" /><path d="M3.500 7.300Q10 2.500 16.500 7.300M6.500 10Q10 7.300 13.500 10" /><circle cx="10" cy="12" r="1" fill="#dfdbd2" stroke="none" />
          </svg>
          <LanguageBadge>En</LanguageBadge>
          <svg width="10" height="16" viewBox="1 0 10 16" fill="none" stroke="#dfdbd2" strokeWidth="1.500"><path d="M2 4.500L10 11L6 14.500V1.500L10 5L2 11.500" /></svg>
          <svg width="24" height="12" viewBox="0 0 24 12">
            <rect x=".7" y=".7" width="20.600" height="10.600" rx="2" fill="none" stroke="#dfdbd2" strokeWidth="1.400" /><path d="M2.500 2.500H19.500V9.500H2.500Z" fill="#98958c" /><path d="M22 3.500H24V8.500H22Z" fill="#dfdbd2" /><path d="M5 5L11 3L12 5.500L17 7.500L11 8L10 6Z" fill="#f4f2ec" />
          </svg>
          <svg width="18" height="12" viewBox="0 0 18 12"><path d="M0 4H3L7 .5V11.500L3 8H0Z" fill="#817e76" /><path d="M11 3.500L16.500 9M16.500 3.500L11 9" stroke="#817e76" strokeWidth="1.700" /></svg>
          <Clock>2:21 PM</Clock>
          <svg width="17" height="17" viewBox="0 0 17 17" fill="none" stroke="#dfdbd2">
            <path d="M6 3.900A5.300 5.300 0 1 0 11 3.900" strokeWidth="1.700" /><path d="M8.500 1V8" strokeWidth="1.700" />
            <path d="M3.700 3.700L2.500 2.500M13.300 3.700L14.500 2.500M2.500 8.500H.5M14.500 8.500H16.500M3.700 13.300L2.500 14.500M13.300 13.300L14.500 14.500M8.500 14.500V16.500" strokeWidth="2.200" />
          </svg>
        </Indicators>
      </MenuBar>
      <Body>
        <Launcher>
          {launcherItems.map((item) => (
            <TileRow key={item.name}>
              <Pips>
                {item.pips === 1 && <svg width="5" height="12" viewBox="0 0 5 12"><path d="M0 2L4.500 6L0 10Z" fill="#d8d0d0" /></svg>}
                {item.pips === 2 && <svg width="5" height="12" viewBox="0 0 5 12"><path d="M0 3L4.500 4.500L0 5.500ZM0 7L4.500 8L0 9.500Z" fill="#d8d0d0" stroke="#d8d0d0" /></svg>}
              </Pips>
              <Tile $bg={item.bg} aria-label={item.name}>{item.icon}</Tile>
            </TileRow>
          ))}
          <FoldedTiles />
        </Launcher>
        <Rviz>
          <Toolbar>
            <Grip />
            {tools.map((t) => (
              <ToolButton key={t.name} $width={t.width} $active={t.active}>{t.icon}{t.name}</ToolButton>
            ))}
            <ToolButton $width={44} aria-label="Add tool"><PlusIcon /></ToolButton>
            <ToolButton $width={44} aria-label="Remove tool"><MinusIcon /></ToolButton>
          </Toolbar>
          <Workspace>
            <DisplaysDock />
            <VHandle>
              <Dots />
              <svg width="7" height="8" viewBox="0 0 7 8"><path d="M6 .5V7.500L1 4Z" fill="#777" stroke="#666" /></svg>
            </VHandle>
            <MapView />
            <VHandle>
              <svg width="7" height="8" viewBox="0 0 7 8"><path d="M1 .5V7.500L6 4Z" fill="#777" stroke="#666" /></svg>
              <Dots />
            </VHandle>
            <ViewsDock />
          </Workspace>
          <HHandle />
          <DockTitle>
            <svg width="16" height="16" viewBox="0 0 16 16"><circle cx="8" cy="8" r="7" fill="#fff" stroke="#555" strokeWidth="1.800" /><path d="M8 4V8.500H12" fill="none" stroke="#222" strokeWidth="1.200" /></svg>
            <DockName>Time</DockName>
            <CloseButton aria-label="Close Time"><Cross /></CloseButton>
          </DockTitle>
          <TimeRow>
            {times.map((t) => (
              <TimeField key={t.id} $label={t.width}>
                <label htmlFor={t.id}>{t.label}</label>
                <TimeInput id={t.id} defaultValue={t.value} />
              </TimeField>
            ))}
            <Experimental><CheckBox type="checkbox" />Experimental</Experimental>
          </TimeRow>
          <StatusRow>
            <ResetButton>Reset</ResetButton>
            <span>30 fps</span>
          </StatusRow>
        </Rviz>
      </Body>
    </Desktop>
  );
}
